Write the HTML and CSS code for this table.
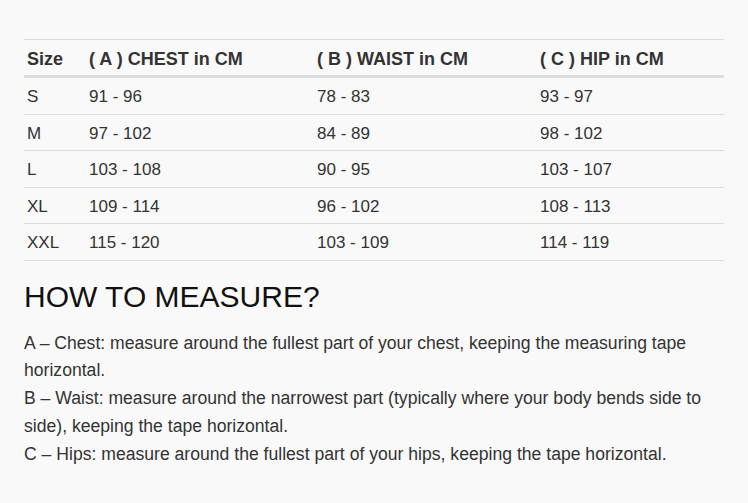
FILE: index.html
```html
<!DOCTYPE html>
<html>
<head>
<meta charset="utf-8">
<link rel="stylesheet" href="styles.css">
</head>
<body>
<div class="page">
  <table class="sizes">
    <thead>
      <tr>
        <th class="c1">Size</th>
        <th class="c2">( A ) CHEST in CM</th>
        <th class="c3">( B ) WAIST in CM</th>
        <th class="c4">( C ) HIP in CM</th>
      </tr>
    </thead>
    <tbody>
      <tr><td>S</td><td>91 - 96</td><td>78 - 83</td><td>93 - 97</td></tr>
      <tr><td>M</td><td>97 - 102</td><td>84 - 89</td><td>98 - 102</td></tr>
      <tr><td>L</td><td>103 - 108</td><td>90 - 95</td><td>103 - 107</td></tr>
      <tr><td>XL</td><td>109 - 114</td><td>96 - 102</td><td>108 - 113</td></tr>
      <tr><td>XXL</td><td>115 - 120</td><td>103 - 109</td><td>114 - 119</td></tr>
    </tbody>
  </table>
  <h2 class="title">HOW TO MEASURE?</h2>
  <p class="text">A – Chest: measure around the fullest part of your chest, keeping the measuring tape horizontal.<br>B – Waist: measure around the narrowest part (typically where your body bends side to side), keeping the tape horizontal.<br>C – Hips: measure around the fullest part of your hips, keeping the tape horizontal.</p>
</div>
</body>
</html>
```

FILE: styles.css
```css
html, body {
  margin: 0;
  padding: 0;
  background: #f9f9f9;
}
body {
  font-family: "Liberation Sans", Arial, sans-serif;
  color: #333;
}
.page {
  padding: 39px 24px 0 24px;
  width: 700px;
}
.sizes {
  width: 700px;
  border-collapse: collapse;
  table-layout: fixed;
  font-size: 17px;
}
.sizes th, .sizes td {
  text-align: left;
  padding: 9px 3px 7px;
  line-height: 19.5px;
  border-top: 1px solid #ddd;
}
.sizes th {
  font-weight: bold;
  font-size: 18px;
  line-height: 20px;
  border-bottom: 3px solid #ddd;
  padding: 9px 3px 6px;
}
.sizes tbody tr:first-child td { border-top: none; }
.sizes tbody tr:last-child td { border-bottom: 1px solid #ddd; }
.c1 { width: 56px; }
.c2 { width: 222px; }
.c3 { width: 217px; }
.c4 { width: auto; }
.title {
  font-size: 30px;
  font-weight: normal;
  color: #111;
  margin: 19px 0 0 0;
  line-height: 34px;
}
.text {
  font-size: 17.6px;
  line-height: 27.75px;
  margin: 16px 0 0 0;
}
```
